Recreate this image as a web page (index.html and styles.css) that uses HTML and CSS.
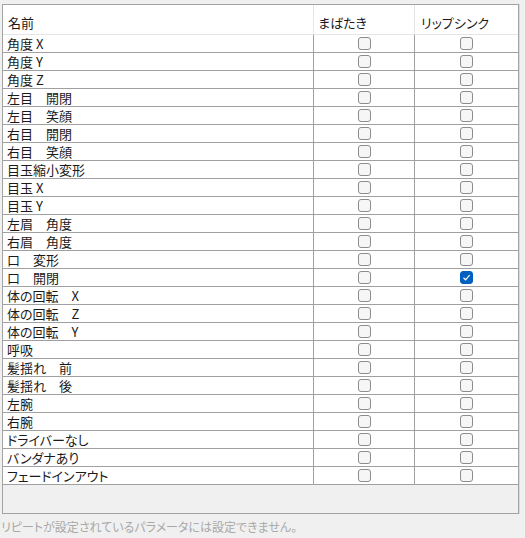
FILE: index.html
```html
<!DOCTYPE html>
<html lang="ja">
<head>
  <meta charset="UTF-8">
  <title>パラメータ設定</title>
  <link rel="stylesheet" href="styles.css">
</head>
<body>
  <div class="frame">
    <div class="grid">
      <div class="head name">名前</div>
      <div class="head">まばたき</div>
      <div class="head last">リップシンク</div>
    </div>
    <div class="grid" id="rows"></div>
  </div>
  <p class="note">リピートが設定されているパラメータには設定できません。</p>

  <script>
    // Parameter list: [name, blink, lipsync]
    const params = [
      ['角度 X', false, false],
      ['角度 Y', false, false],
      ['角度 Z', false, false],
      ['左目　開閉', false, false],
      ['左目　笑顔', false, false],
      ['右目　開閉', false, false],
      ['右目　笑顔', false, false],
      ['目玉縮小変形', false, false],
      ['目玉 X', false, false],
      ['目玉 Y', false, false],
      ['左眉　角度', false, false],
      ['右眉　角度', false, false],
      ['口　変形', false, false],
      ['口　開閉', false, true],
      ['体の回転　X', false, false],
      ['体の回転　Z', false, false],
      ['体の回転　Y', false, false],
      ['呼吸', false, false],
      ['髪揺れ　前', false, false],
      ['髪揺れ　後', false, false],
      ['左腕', false, false],
      ['右腕', false, false],
      ['ドライバーなし', false, false],
      ['バンダナあり', false, false],
      ['フェードインアウト', false, false]
    ];

    const rows = document.getElementById('rows');
    const box = (on) => '<span class="check' + (on ? ' on' : '') + '">' +
      (on ? '<svg width="9" height="9" viewBox="0 0 9 9"><path d="M1.5 4.8 L3.6 6.8 L7.6 2.2" fill="none" stroke="#fff" stroke-width="1.2"/></svg>' : '') +
      '</span>';

    params.forEach(([name, blink, lip]) => {
      rows.insertAdjacentHTML('beforeend',
        '<div class="cell name">' + name + '</div>' +
        '<div class="cell">' + box(blink) + '</div>' +
        '<div class="cell last">' + box(lip) + '</div>');
    });
  </script>
</body>
</html>
```

FILE: styles.css
```css
body {
  margin: 0;
  background-color: #f0f0f0;
  font-family: "Noto Sans CJK JP", "Noto Sans", sans-serif;
  font-size: 13px;
  font-feature-settings: "palt";
  color: #1a1a1a;
}
.frame {
  margin: 4px 0 0 2px;
  width: 515px;
  height: 508px;
  border: 1px solid #a3a3a3;
  box-shadow: 1px 0 0 #dadada;
  background-color: #f0f0f0;
}
.grid {
  display: grid;
  grid-template-columns: 311px 101px 103px;
}
.head {
  height: 29px;
  line-height: 36px;
  padding-left: 4px;
  background-color: #fff;
  border-right: 1px solid #e5e5e5;
  border-bottom: 1px solid #e5e5e5;
  white-space: nowrap;
}
.head.name {
  padding-left: 5px;
}
.head.last {
  padding-left: 6px;
  border-right: none;
}
.cell {
  height: 17px;
  background-color: #fff;
  border-right: 1px solid #a0a0a0;
  border-bottom: 1px solid #a0a0a0;
  display: flex;
  align-items: center;
  justify-content: center;
}
.cell.name {
  justify-content: flex-start;
  padding-left: 4px;
  white-space: nowrap;
}
.cell.last {
  border-right: none;
}
.check {
  width: 11px;
  height: 11px;
  border: 1px solid #8c8c8c;
  border-radius: 3px;
  background-color: #f6f6f6;
  display: flex;
  align-items: center;
  justify-content: center;
}
.check.on {
  background-color: #0060c0;
  border-color: #0060c0;
}
.note {
  margin: 5px 0 0 1px;
  font-size: 12px;
  color: #a8a8a8;
  line-height: 16px;
}
```
